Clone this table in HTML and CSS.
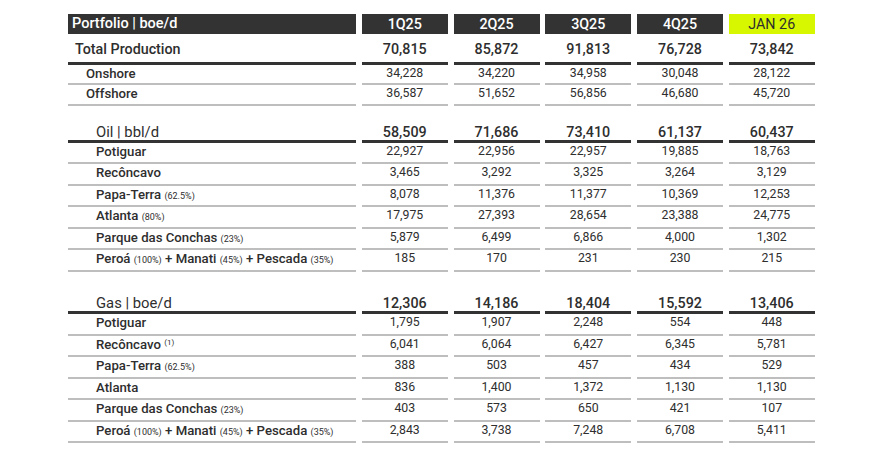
FILE: index.html
```html
<!DOCTYPE html>
<html lang="en">
<head>
<meta charset="utf-8">
<title>Portfolio production</title>
<link rel="stylesheet" href="styles.css">
</head>
<body>
<div class="table">
  <div class="row head">
    <div class="cell label">Portfolio | boe/d</div>
    <div class="cell">1Q25</div>
    <div class="cell">2Q25</div>
    <div class="cell">3Q25</div>
    <div class="cell">4Q25</div>
    <div class="cell hl">JAN 26</div>
  </div>
  <div class="row total">
    <div class="cell label">Total Production</div>
    <div class="cell">70,815</div>
    <div class="cell">85,872</div>
    <div class="cell">91,813</div>
    <div class="cell">76,728</div>
    <div class="cell">73,842</div>
  </div>
  <div class="row sub first">
    <div class="cell label l1">Onshore</div>
    <div class="cell">34,228</div>
    <div class="cell">34,220</div>
    <div class="cell">34,958</div>
    <div class="cell">30,048</div>
    <div class="cell">28,122</div>
  </div>
  <div class="row sub">
    <div class="cell label l1">Offshore</div>
    <div class="cell">36,587</div>
    <div class="cell">51,652</div>
    <div class="cell">56,856</div>
    <div class="cell">46,680</div>
    <div class="cell">45,720</div>
  </div>

  <div class="row group oil">
    <div class="cell label">Oil | bbl/d</div>
    <div class="cell">58,509</div>
    <div class="cell">71,686</div>
    <div class="cell">73,410</div>
    <div class="cell">61,137</div>
    <div class="cell">60,437</div>
  </div>
  <div class="row sub">
    <div class="cell label">Potiguar</div>
    <div class="cell">22,927</div>
    <div class="cell">22,956</div>
    <div class="cell">22,957</div>
    <div class="cell">19,885</div>
    <div class="cell">18,763</div>
  </div>
  <div class="row sub">
    <div class="cell label">Recôncavo</div>
    <div class="cell">3,465</div>
    <div class="cell">3,292</div>
    <div class="cell">3,325</div>
    <div class="cell">3,264</div>
    <div class="cell">3,129</div>
  </div>
  <div class="row sub">
    <div class="cell label">Papa-Terra <small>(62.5%)</small></div>
    <div class="cell">8,078</div>
    <div class="cell">11,376</div>
    <div class="cell">11,377</div>
    <div class="cell">10,369</div>
    <div class="cell">12,253</div>
  </div>
  <div class="row sub">
    <div class="cell label">Atlanta <small>(80%)</small></div>
    <div class="cell">17,975</div>
    <div class="cell">27,393</div>
    <div class="cell">28,654</div>
    <div class="cell">23,388</div>
    <div class="cell">24,775</div>
  </div>
  <div class="row sub">
    <div class="cell label">Parque das Conchas <small>(23%)</small></div>
    <div class="cell">5,879</div>
    <div class="cell">6,499</div>
    <div class="cell">6,866</div>
    <div class="cell">4,000</div>
    <div class="cell">1,302</div>
  </div>
  <div class="row sub">
    <div class="cell label">Peroá <small>(100%)</small> + Manati <small>(45%)</small> + Pescada <small>(35%)</small></div>
    <div class="cell">185</div>
    <div class="cell">170</div>
    <div class="cell">231</div>
    <div class="cell">230</div>
    <div class="cell">215</div>
  </div>

  <div class="row group gas">
    <div class="cell label">Gas | boe/d</div>
    <div class="cell">12,306</div>
    <div class="cell">14,186</div>
    <div class="cell">18,404</div>
    <div class="cell">15,592</div>
    <div class="cell">13,406</div>
  </div>
  <div class="row sub">
    <div class="cell label">Potiguar</div>
    <div class="cell">1,795</div>
    <div class="cell">1,907</div>
    <div class="cell">2,248</div>
    <div class="cell">554</div>
    <div class="cell">448</div>
  </div>
  <div class="row sub">
    <div class="cell label">Recôncavo <sup>(1)</sup></div>
    <div class="cell">6,041</div>
    <div class="cell">6,064</div>
    <div class="cell">6,427</div>
    <div class="cell">6,345</div>
    <div class="cell">5,781</div>
  </div>
  <div class="row sub">
    <div class="cell label">Papa-Terra <small>(62.5%)</small></div>
    <div class="cell">388</div>
    <div class="cell">503</div>
    <div class="cell">457</div>
    <div class="cell">434</div>
    <div class="cell">529</div>
  </div>
  <div class="row sub">
    <div class="cell label">Atlanta</div>
    <div class="cell">836</div>
    <div class="cell">1,400</div>
    <div class="cell">1,372</div>
    <div class="cell">1,130</div>
    <div class="cell">1,130</div>
  </div>
  <div class="row sub">
    <div class="cell label">Parque das Conchas <small>(23%)</small></div>
    <div class="cell">403</div>
    <div class="cell">573</div>
    <div class="cell">650</div>
    <div class="cell">421</div>
    <div class="cell">107</div>
  </div>
  <div class="row sub">
    <div class="cell label">Peroá <small>(100%)</small> + Manati <small>(45%)</small> + Pescada <small>(35%)</small></div>
    <div class="cell">2,843</div>
    <div class="cell">3,738</div>
    <div class="cell">7,248</div>
    <div class="cell">6,708</div>
    <div class="cell">5,411</div>
  </div>
</div>
</body>
</html>
```

FILE: styles.css
```css
html, body {
  margin: 0;
  padding: 0;
  background: #ffffff;
}

body {
  font-family: Roboto, "Liberation Sans", Arial, sans-serif;
  color: #2e2e2e;
}

.table {
  display: flex;
  flex-direction: column;
  padding: 14px 0 0 68px;
}

.row {
  display: grid;
  grid-template-columns: 288px repeat(5, 86px);
  column-gap: 5.75px;
}

.cell {
  box-sizing: border-box;
  text-align: center;
  white-space: nowrap;
}

.cell.label {
  text-align: left;
}

/* header bar */
.head .cell {
  height: 20px;
  line-height: 20px;
  background: #333333;
  color: #ffffff;
  font-size: 14.3px;
  font-weight: 500;
}

.head .cell.label {
  padding-left: 4px;
  font-size: 14.5px;
}

.head .cell.hl {
  background: #d6f700;
  color: #2e2e2e;
  font-weight: 400;
}

/* total production */
.total .cell {
  height: 31px;
  padding-top: 7px;
  line-height: 16px;
  font-size: 14.3px;
  font-weight: 500;
  border-bottom: 3px solid #333333;
}

.total .cell.label {
  padding-left: 7px;
}

/* sub rows */
.sub .cell {
  height: 21.5px;
  line-height: 17px;
  font-size: 12.3px;
  border-bottom: 2px solid #bebebe;
}

.sub.first .cell {
  height: 19.5px;
}

.sub .cell.label {
  padding-left: 28px;
  font-size: 13.2px;
  font-weight: 500;
}

.sub .cell.label.l1 {
  padding-left: 18px;
}

.sub small {
  font-size: 9px;
  font-weight: 400;
}

.sub sup {
  font-size: 8px;
  font-weight: 400;
  vertical-align: 4px;
  line-height: 0;
}

/* group headers (Oil, Gas) */
.group .cell {
  line-height: 16px;
  font-size: 14.3px;
  font-weight: 500;
  border-bottom: 3px solid #333333;
}

.group .cell.label {
  padding-left: 28px;
  font-size: 14.8px;
  font-weight: 400;
}

.oil .cell {
  height: 36.5px;
  padding-top: 17.5px;
}

.gas .cell {
  height: 42.5px;
  padding-top: 23px;
}
```
